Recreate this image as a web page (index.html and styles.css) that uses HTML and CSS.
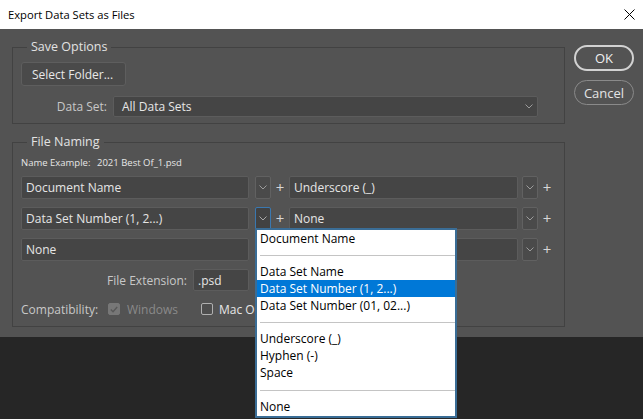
FILE: index.html
```html
<!DOCTYPE html>
<html>
<head>
<meta charset="utf-8">
<title>Export Data Sets as Files</title>
<link rel="stylesheet" href="styles.css">
</head>
<body>
<header class="titlebar">
  <span class="title">Export Data Sets as Files</span>
  <svg class="close" width="11" height="11" viewBox="0 0 11 11"><path d="M0.5 0.5 L10.5 10.5 M10.5 0.5 L0.5 10.5" stroke="#000" stroke-width="1" fill="none"/></svg>
</header>
<div class="dialog">
  <div class="main">
    <fieldset class="group save">
      <legend>Save Options</legend>
      <button class="btn-folder">Select Folder...</button>
      <div class="dataset-row">
        <span class="lbl">Data Set:</span>
        <div class="select">
          <span>All Data Sets</span>
          <svg class="chev" width="8" height="5" viewBox="0 0 8 5"><polyline points="0.5,0.5 4,4 7.5,0.5" fill="none" stroke="#9c9c9c" stroke-width="1"/></svg>
        </div>
      </div>
    </fieldset>
    <fieldset class="group naming">
      <legend>File Naming</legend>
      <div class="example"><span class="ex-lbl">Name Example:</span><span>2021 Best Of_1.psd</span></div>

      <div class="name-row first">
        <div class="field fa">Document Name</div>
        <div class="chev-btn"><svg class="chev" width="8" height="5" viewBox="0 0 8 5"><polyline points="0.5,0.5 4,4 7.5,0.5" fill="none" stroke="#9c9c9c" stroke-width="1"/></svg></div>
        <span class="plus">+</span>
        <div class="field fb">Underscore (_)</div>
        <div class="chev-btn second"><svg class="chev" width="8" height="5" viewBox="0 0 8 5"><polyline points="0.5,0.5 4,4 7.5,0.5" fill="none" stroke="#9c9c9c" stroke-width="1"/></svg></div>
        <span class="plus">+</span>
      </div>

      <div class="name-row">
        <div class="field fa">Data Set Number (1, 2...)</div>
        <div class="chev-btn focused"><svg class="chev" width="8" height="5" viewBox="0 0 8 5"><polyline points="0.5,0.5 4,4 7.5,0.5" fill="none" stroke="#a8a8a8" stroke-width="1"/></svg></div>
        <span class="plus">+</span>
        <div class="field fb">None</div>
        <div class="chev-btn second"><svg class="chev" width="8" height="5" viewBox="0 0 8 5"><polyline points="0.5,0.5 4,4 7.5,0.5" fill="none" stroke="#9c9c9c" stroke-width="1"/></svg></div>
        <span class="plus">+</span>
      </div>

      <div class="name-row">
        <div class="field fa">None</div>
        <div class="chev-btn"><svg class="chev" width="8" height="5" viewBox="0 0 8 5"><polyline points="0.5,0.5 4,4 7.5,0.5" fill="none" stroke="#9c9c9c" stroke-width="1"/></svg></div>
        <span class="plus"></span>
        <div class="field fb"></div>
        <div class="chev-btn second"><svg class="chev" width="8" height="5" viewBox="0 0 8 5"><polyline points="0.5,0.5 4,4 7.5,0.5" fill="none" stroke="#9c9c9c" stroke-width="1"/></svg></div>
        <span class="plus">+</span>
      </div>

      <div class="ext-row">
        <span class="ext-lbl">File Extension:</span>
        <div class="field ext">.psd</div>
      </div>

      <div class="compat-row">
        <span class="compat-lbl">Compatibility:</span>
        <span class="check-item win"><span class="box checked disabled"><svg width="8" height="7" viewBox="0 0 8 7"><polyline points="0.8,3.6 3,5.8 7.2,1" fill="none" stroke="#585858" stroke-width="1.4"/></svg></span><span class="dis">Windows</span></span>
        <span class="check-item mac"><span class="box"></span><span class="mac-text">Mac OS</span></span>
      </div>
    </fieldset>
  </div>
  <div class="actions">
    <button class="pill ok">OK</button>
    <button class="pill cancel">Cancel</button>
  </div>
</div>

<ul class="menu">
  <li>Document Name</li>
  <li class="sep"></li>
  <li>Data Set Name</li>
  <li class="hl">Data Set Number (1, 2...)</li>
  <li>Data Set Number (01, 02...)</li>
  <li class="sep"></li>
  <li>Underscore (_)</li>
  <li>Hyphen (-)</li>
  <li>Space</li>
  <li class="sep last"></li>
  <li>None</li>
</ul>
</body>
</html>
```

FILE: styles.css
```css
* { box-sizing: border-box; }
html, body { margin: 0; padding: 0; }
body {
  width: 643px;
  height: 419px;
  background: #262626;
  font-family: "Open Sans", "Noto Sans", sans-serif;
  font-size: 12px;
  color: #e6e6e6;
  position: relative;
  overflow: hidden;
}
.titlebar {
  height: 29px;
  background: #fff;
  color: #000;
  display: flex;
  align-items: center;
  justify-content: space-between;
  padding: 0 8px;
}
.title { font-size: 11.2px; }
.close { display: block; }

.dialog {
  height: 308px;
  background: #535353;
  display: flex;
  align-items: flex-start;
  padding: 10px 0 0 12px;
}
.main { width: 553px; }

.group {
  margin: 0;
  min-width: 0;
  border: 1px solid #424242;
  padding: 7px 26px 6px 8px;
}
.group legend {
  padding: 0 4px;
  margin-left: 6px;
  line-height: 16px;
  font-size: 12.5px;
  color: #e2e2e2;
}
.naming {
  margin-top: 10px;
  padding: 5px 8px 7px 8px;
}

.btn-folder {
  display: block;
  width: 105px;
  height: 24px;
  padding: 0 0 0 10px;
  text-align: left;
  background: #4a4a4a;
  border: 1px solid #5e5e5e;
  border-radius: 3px;
  color: #e8e8e8;
  font: inherit;
}

.dataset-row {
  display: flex;
  align-items: center;
  margin-top: 10px;
}
.lbl {
  width: 86px;
  margin-right: 6px;
  text-align: right;
  color: #c8c8c8;
}
.select {
  flex: 1;
  height: 21px;
  display: flex;
  align-items: center;
  justify-content: space-between;
  background: #454545;
  border: 1px solid #5c5c5c;
  border-radius: 2px;
  padding: 0 4px 0 8px;
}
.chev { display: block; }

.example {
  height: 14px;
  display: flex;
  align-items: center;
  font-size: 9.5px;
  color: #e6e6e6;
}
.ex-lbl { width: 76px; }

.name-row {
  display: flex;
  align-items: center;
  height: 23px;
  margin-top: 8px;
}
.name-row.first { margin-top: 7px; }
.field {
  height: 23px;
  display: flex;
  align-items: center;
  padding-left: 4px;
  background: #454545;
  border: 1px solid #5c5c5c;
  border-radius: 2px;
  white-space: nowrap;
  overflow: hidden;
}
.fa { width: 228px; }
.fb { width: 229px; }
.chev-btn {
  width: 16px;
  height: 23px;
  margin-left: 6px;
  display: flex;
  align-items: center;
  justify-content: center;
  background: #4a4a4a;
  border: 1px solid #616161;
  border-radius: 2px;
}
.chev-btn.second { margin-left: 4px; }
.chev-btn.focused {
  background: #424242;
  border-color: #3a78b0;
}
.plus {
  width: 18px;
  height: 23px;
  text-align: center;
  font-size: 15px;
  line-height: 23px;
  color: #d6d6d6;
}

.ext-row {
  display: flex;
  align-items: center;
  height: 22px;
  margin-top: 8px;
}
.ext-lbl {
  width: 166px;
  margin-right: 6px;
  text-align: right;
  color: #c8c8c8;
}
.field.ext { width: 56px; height: 22px; padding-left: 4px; }

.compat-row {
  display: flex;
  align-items: center;
  height: 20px;
  margin-top: 8px;
}
.compat-lbl {
  width: 87px;
  color: #c8c8c8;
}
.check-item {
  display: flex;
  align-items: center;
  color: #e6e6e6;
  white-space: nowrap;
}
.check-item.win { width: 93px; }
.box {
  flex: none;
  width: 12px;
  height: 12px;
  margin-right: 6px;
  border: 1px solid #b0b0b0;
  border-radius: 2px;
  background: #4e4e4e;
  display: flex;
  align-items: center;
  justify-content: center;
}
.box.checked.disabled {
  background: #777;
  border-color: #777;
  margin-right: 7px;
}
.dis { color: #8a8a8a; }

.actions {
  margin-left: 9px;
  width: 60px;
  display: flex;
  flex-direction: column;
}
.pill {
  font: inherit;
  font-size: 13px;
  color: #f0f0f0;
  background: transparent;
  padding: 0;
}
.pill.ok {
  height: 26px;
  margin-top: 6px;
  border: 2px solid #d2d2d2;
  border-radius: 13px;
}
.pill.cancel {
  height: 25px;
  margin-top: 9px;
  border: 1px solid #8a8a8a;
  border-radius: 13px;
  color: #e4e4e4;
}

.menu {
  position: absolute;
  left: 255px;
  top: 228px;
  width: 202px;
  margin: 0;
  padding: 0 0 1px 0;
  list-style: none;
  background: #fff;
  border: 2px solid #3a6d96;
  color: #000;
  font-size: 12px;
}
.menu li {
  height: 17px;
  line-height: 17px;
  padding-left: 3px;
  white-space: nowrap;
}
.menu li.hl {
  background: #0078d7;
  color: #fff;
}
.menu li.sep {
  height: 16px;
  padding-top: 8px;
}
.menu li.sep.last {
  height: 17px;
  padding-top: 9px;
}
.menu li.sep::before {
  content: "";
  display: block;
  height: 1px;
  background: #c4c4c4;
}
```
